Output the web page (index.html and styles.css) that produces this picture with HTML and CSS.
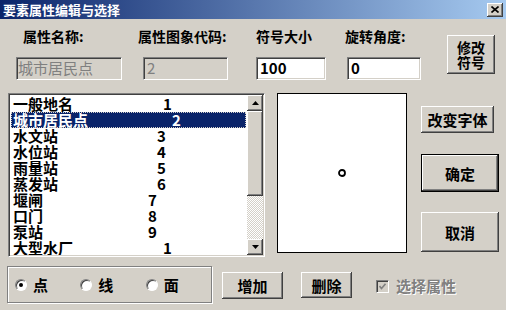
FILE: index.html
```html
<!DOCTYPE html>
<html>
<head>
    <title>要素属性编辑与选择</title>
    <link rel="stylesheet" href="styles.css">
</head>
<body>
    <div class="window">
        <div class="titlebar">
            <span class="title">要素属性编辑与选择</span>
            <span class="close">
                <svg width="8" height="7" viewBox="0 0 8 7"><path d="M0.5 0.5 L7.5 6.5 M7.5 0.5 L0.5 6.5" stroke="#000" stroke-width="1.6"/></svg>
            </span>
        </div>

        <div class="fields">
            <div class="field f-name">
                <label>属性名称:</label>
                <div class="edit sunken disabled">城市居民点</div>
            </div>
            <div class="field f-code">
                <label>属性图象代码:</label>
                <div class="edit sunken disabled">2</div>
            </div>
            <div class="field f-size">
                <label>符号大小</label>
                <div class="edit sunken">100</div>
            </div>
            <div class="field f-angle">
                <label>旋转角度:</label>
                <div class="edit sunken">0</div>
            </div>
            <button class="btn btn-modify">修改<br>符号</button>
        </div>

        <div class="middle">
            <div class="listbox sunken">
                <ul class="items">
                    <li class="item"><span class="name w4">一般地名</span><span>1</span></li>
                    <li class="item selected"><span class="name w5">城市居民点</span><span>2</span></li>
                    <li class="item"><span class="name w3">水文站</span><span>3</span></li>
                    <li class="item"><span class="name w3">水位站</span><span>4</span></li>
                    <li class="item"><span class="name w3">雨量站</span><span>5</span></li>
                    <li class="item"><span class="name w3">蒸发站</span><span>6</span></li>
                    <li class="item"><span class="name w2">堰闸</span><span>7</span></li>
                    <li class="item"><span class="name w2">口门</span><span>8</span></li>
                    <li class="item"><span class="name w2">泵站</span><span>9</span></li>
                    <li class="item"><span class="name w4">大型水厂</span><span>1</span></li>
                </ul>
                <div class="scrollbar">
                    <div class="sb-btn">
                        <svg width="7" height="4" viewBox="0 0 7 4"><path d="M3.5 0 L7 4 L0 4 Z" fill="#000"/></svg>
                    </div>
                    <div class="sb-thumb"></div>
                    <div class="sb-track"></div>
                    <div class="sb-btn">
                        <svg width="7" height="4" viewBox="0 0 7 4"><path d="M0 0 L7 0 L3.5 4 Z" fill="#000"/></svg>
                    </div>
                </div>
            </div>

            <div class="preview">
                <svg width="10" height="10" viewBox="0 0 10 10"><circle cx="5" cy="5" r="3" fill="none" stroke="#000" stroke-width="1.8"/></svg>
            </div>

            <div class="side">
                <button class="btn btn-font">改变字体</button>
                <button class="btn btn-ok">确定</button>
                <button class="btn btn-cancel">取消</button>
            </div>
        </div>

        <div class="bottom">
            <div class="group">
                <div class="radio"><span class="dot checked"></span><span>点</span></div>
                <div class="radio"><span class="dot"></span><span>线</span></div>
                <div class="radio"><span class="dot"></span><span>面</span></div>
            </div>
            <button class="btn btn-add">增加</button>
            <button class="btn btn-del">删除</button>
            <div class="check">
                <span class="box">
                    <svg width="7" height="7" viewBox="0 0 7 7"><path d="M0.5 3 L2.5 5.5 L6.5 0.8" fill="none" stroke="#808080" stroke-width="1.6"/></svg>
                </span>
                <span class="check-label">选择属性</span>
            </div>
        </div>
    </div>
</body>
</html>
```

FILE: styles.css
```css
* {
    box-sizing: border-box;
}
body {
    margin: 0;
    background: #D4D0C8;
    font-family: "Noto Sans CJK SC", "Liberation Sans", sans-serif;
}
.window {
    width: 506px;
    height: 310px;
    background: #D4D0C8;
    overflow: hidden;
}
.titlebar {
    height: 19px;
    background: linear-gradient(to right, #0A246A, #A6CAF0);
    display: flex;
    align-items: center;
    justify-content: space-between;
    padding: 0 3px 0 3px;
}
.title {
    color: #fff;
    font-weight: bold;
    font-size: 13px;
    line-height: 19px;
}
.close {
    width: 16px;
    height: 14px;
    background: #D4D0C8;
    display: flex;
    align-items: center;
    justify-content: center;
    box-shadow: inset -1px -1px #404040, inset 1px 1px #fff, inset -2px -2px #808080;
}

/* common win32 bevels */
.sunken {
    border: 1px solid;
    border-color: #808080 #fff #fff #808080;
    box-shadow: inset 1px 1px #404040, inset -1px -1px #D4D0C8;
}
.btn {
    background: #D4D0C8;
    border: none;
    padding: 0;
    color: #000;
    font-family: "Noto Sans CJK SC", "Liberation Sans", sans-serif;
    font-weight: bold;
    font-size: 15px;
    line-height: 15px;
    box-shadow: inset -1px -1px #404040, inset 1px 1px #fff, inset -2px -2px #808080;
}

/* top row */
.fields {
    display: flex;
    align-items: flex-start;
    height: 74px;
    padding-top: 9px;
}
.field {
    display: flex;
    flex-direction: column;
}
.field label {
    font-size: 14px;
    font-weight: bold;
    line-height: 16px;
    height: 16px;
    white-space: nowrap;
}
.edit {
    height: 23px;
    margin-top: 13px;
    background: #fff;
    font-size: 15px;
    font-weight: bold;
    line-height: 20px;
    padding: 0 3px;
}
.edit.disabled {
    background: #D4D0C8;
    color: #808080;
    font-weight: normal;
    padding: 0 1px;
}
.f-name {
    margin-left: 16px;
    width: 106px;
}
.f-name label {
    padding-left: 7px;
}
.f-code {
    margin-left: 16px;
    width: 94px;
}
.f-code .edit {
    margin-left: 5px;
    width: 85px;
    padding-left: 3px;
}
.f-size {
    margin-left: 24px;
    width: 70px;
}
.f-angle {
    margin-left: 19px;
    width: 76px;
}
.f-angle .edit {
    margin-left: 2px;
    width: 74px;
}
.btn-modify {
    margin-left: 26px;
    margin-top: 7px;
    width: 48px;
    height: 39px;
    font-size: 14px;
}

/* middle row */
.middle {
    display: flex;
    align-items: flex-start;
    height: 164px;
}
.listbox {
    margin-left: 8px;
    width: 257px;
    height: 164px;
    background: #fff;
    display: flex;
    padding: 1px;
}
.items {
    flex: 1;
    list-style: none;
    margin: 0;
    padding: 1px 1px 0 1px;
    overflow: hidden;
}
.item {
    display: flex;
    height: 16px;
    line-height: 16px;
    font-size: 15px;
    font-weight: bold;
    padding-left: 2px;
    white-space: nowrap;
}
.item.selected {
    background: #0A246A;
    color: #fff;
    outline: 1px dotted #D4D0C8;
    outline-offset: -1px;
}
.name {
    display: inline-block;
}
.w2 { width: 135px; }
.w3 { width: 144px; }
.w4 { width: 150px; }
.w5 { width: 159px; }
.scrollbar {
    width: 16px;
    display: flex;
    flex-direction: column;
}
.sb-btn {
    height: 16px;
    background: #D4D0C8;
    display: flex;
    align-items: center;
    justify-content: center;
    box-shadow: inset -1px -1px #404040, inset 1px 1px #fff, inset -2px -2px #808080;
}
.sb-thumb {
    height: 85px;
    background: #D4D0C8;
    box-shadow: inset -1px -1px #404040, inset 1px 1px #fff, inset -2px -2px #808080;
}
.sb-track {
    flex: 1;
    background-image: repeating-conic-gradient(#fff 0 25%, #D4D0C8 0 50%);
    background-size: 2px 2px;
}
.preview {
    margin-left: 12px;
    width: 130px;
    height: 160px;
    border: 1px solid #000;
    background: #fff;
    display: flex;
    align-items: center;
    justify-content: center;
}
.side {
    margin-left: 14px;
    display: flex;
    flex-direction: column;
    align-items: flex-start;
}
.btn-font {
    margin-top: 13px;
    width: 73px;
    height: 27px;
}
.btn-ok {
    margin-top: 21px;
    width: 78px;
    height: 38px;
    border: 1px solid #000;
}
.btn-cancel {
    margin-top: 20px;
    width: 78px;
    height: 40px;
}

/* bottom row */
.bottom {
    display: flex;
    align-items: flex-start;
}
.group {
    margin-left: 7px;
    margin-top: 9px;
    width: 205px;
    height: 37px;
    border: 1px solid #808080;
    box-shadow: inset 1px 1px #fff, 1px 1px #fff;
    display: flex;
    align-items: center;
    padding-left: 7px;
}
.radio {
    width: 69px;
    display: flex;
    align-items: center;
    gap: 6px;
    font-size: 15px;
    font-weight: bold;
    line-height: 16px;
}
.dot {
    width: 12px;
    height: 12px;
    border-radius: 50%;
    background: #fff;
    border: 1px solid;
    border-color: #808080 #fff #fff #808080;
    box-shadow: inset 1px 1px #404040;
    display: flex;
    align-items: center;
    justify-content: center;
}
.dot.checked::after {
    content: "";
    width: 4px;
    height: 4px;
    border-radius: 50%;
    background: #000;
}
.btn-add {
    margin-left: 10px;
    margin-top: 15px;
    width: 61px;
    height: 27px;
}
.btn-del {
    margin-left: 18px;
    margin-top: 15px;
    width: 51px;
    height: 26px;
}
.check {
    margin-left: 24px;
    margin-top: 21px;
    display: flex;
    align-items: center;
    gap: 7px;
}
.box {
    width: 13px;
    height: 13px;
    background: #D4D0C8;
    border: 1px solid;
    border-color: #808080 #fff #fff #808080;
    box-shadow: inset 1px 1px #404040;
    display: flex;
    align-items: center;
    justify-content: center;
}
.check-label {
    font-size: 15px;
    font-weight: bold;
    line-height: 16px;
    color: #808080;
    text-shadow: 1px 1px #fff;
}
```
